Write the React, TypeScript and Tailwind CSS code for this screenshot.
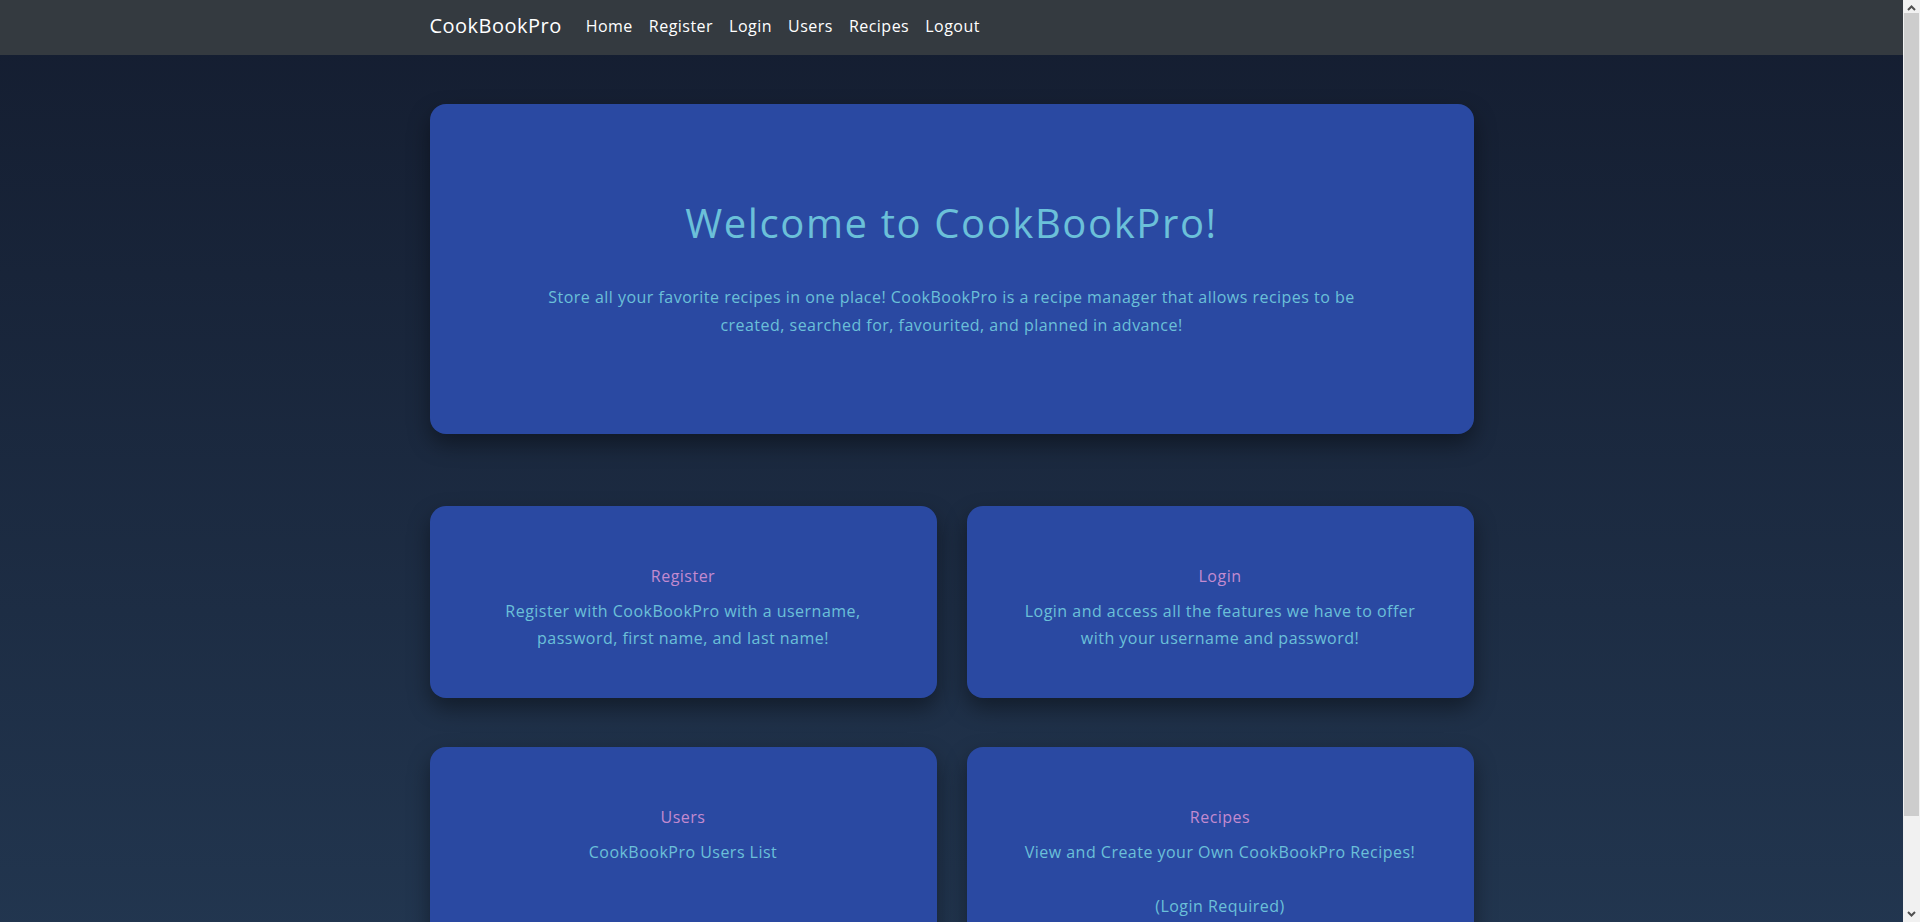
import React from 'react'

const navLinks = ['Home', 'Register', 'Login', 'Users', 'Recipes', 'Logout']

const features = [
  {
    title: 'Register',
    lines: ['Register with CookBookPro with a username,', 'password, first name, and last name!'],
  },
  {
    title: 'Login',
    lines: ['Login and access all the features we have to offer', 'with your username and password!'],
  },
  {
    title: 'Users',
    lines: ['CookBookPro Users List'],
  },
  {
    title: 'Recipes',
    lines: ['View and Create your Own CookBookPro Recipes!', '\u00a0', '(Login Required)'],
  },
]

// browser scrollbar seen at the right edge of the screenshot
const ScrollBar = () => (
  <div className="fixed top-0 right-0 w-[17px] h-screen bg-[#f1f1f1] flex flex-col items-center">
    <svg width="17" height="17" viewBox="0 0 17 17" className="shrink-0">
      <path d="M5 10 L8.5 6.5 L12 10" stroke="#505050" strokeWidth="2" fill="none" />
    </svg>
    <div className="w-[15px] h-[803px] bg-[#cdcdcd] mt-[-4px]" />
    <div className="flex-1" />
    <svg width="17" height="17" viewBox="0 0 17 17" className="shrink-0">
      <path d="M5 7 L8.5 10.5 L12 7" stroke="#505050" strokeWidth="2" fill="none" />
    </svg>
  </div>
)

export default function App() {
  return (
    <div className="min-h-screen pr-[17px] bg-gradient-to-b from-[#141d30] to-[#233852] font-['Open_Sans',sans-serif] tracking-[0.03em]">
      {/* top bar */}
      <nav className="h-[55px] bg-[#343a40]">
        <div className="w-[1044px] mx-auto h-full flex items-center pb-[4px]">
          <a href="#" className="text-white text-[20px] leading-none mr-[24px]">CookBookPro</a>
          <div className="flex items-center gap-[16px]">
            {navLinks.map((link) => (
              <a key={link} href="#" className="text-white text-[16px] leading-none">
                {link}
              </a>
            ))}
          </div>
        </div>
      </nav>

      <main className="w-[1044px] mx-auto pt-[49px] pb-12">
        {/* hero */}
        <section className="h-[330px] rounded-2xl bg-[#2a49a2] shadow-[0_10px_22px_rgba(0,0,0,0.4)] flex flex-col items-center justify-center text-center">
          <h1 className="text-[40px] leading-[48px] tracking-[0.04em] text-[#6bc0d9] mb-9">Welcome to CookBookPro!</h1>
          <p className="text-[16px] leading-[28px] text-[#6bc0d9]">
            Store all your favorite recipes in one place! CookBookPro is a recipe manager that allows recipes to be
            <br />
            created, searched for, favourited, and planned in advance!
          </p>
        </section>

        {/* feature cards */}
        <section className="mt-[72px] grid grid-cols-2 gap-x-[30px] gap-y-[49px]">
          {features.map((f) => (
            <div
              key={f.title}
              className="rounded-2xl bg-[#2a49a2] shadow-[0_10px_22px_rgba(0,0,0,0.4)] pt-[58px] pb-[46px] flex flex-col items-center text-center"
            >
              <h5 className="text-[16px] leading-[24px] text-[#c38bd0] mb-[10px]">{f.title}</h5>
              <p className="text-[16px] leading-[27px] text-[#6bc0d9]">
                {f.lines.map((line, i) => (
                  <React.Fragment key={i}>
                    {i > 0 && <br />}
                    {line}
                  </React.Fragment>
                ))}
              </p>
            </div>
          ))}
        </section>
      </main>

      <ScrollBar />
    </div>
  )
}
